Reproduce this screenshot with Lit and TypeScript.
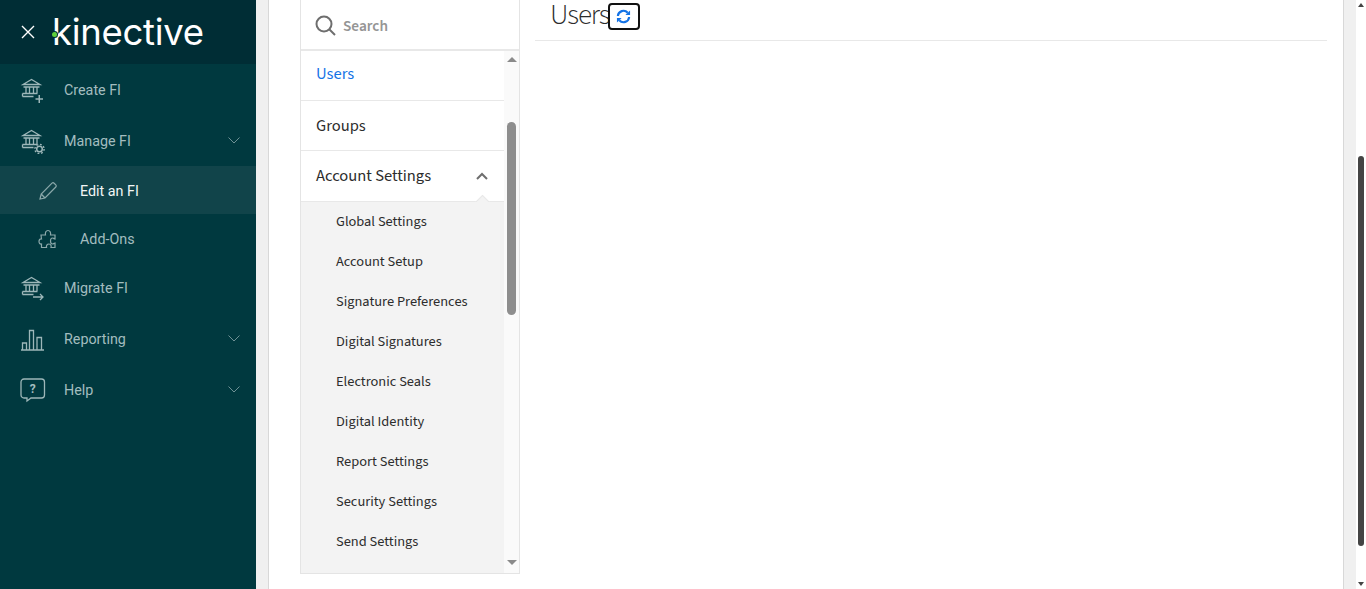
import { LitElement, html, css, svg } from "lit";
import { customElement } from "lit/decorators.js";

const bank = svg`<path d="M3 7.500 11.500 2.500 20 7.500ZM3.500 10h16M6 10v6M9.500 10v6M13.500 10v6M17 10v6M2.500 16.500h15M2.500 19.500h11M2.500 16.500v3"/>`;
const chev = html`<svg class="chev" viewBox="0 0 12 7"><path d="M.5.5 6 6 11.500.5"/></svg>`;

const icons: Record<string, unknown> = {
  create: html`<svg class="ico" viewBox="0 0 26 26">${bank}<path d="M15.500 22h7.500M19.250 18v8" stroke-width="1.500"/></svg>`,
  manage: html`<svg class="ico" viewBox="0 0 26 26">${bank}<circle cx="19.500" cy="21" r="2.800" stroke-width="1.500"/><circle cx="19.500" cy="21" r="4.600" stroke-dasharray="1.800 1.800" stroke-width="1.400"/></svg>`,
  migrate: html`<svg class="ico" viewBox="0 0 26 26">${bank}<path d="M13 22h10M20 19l3 3-3 3"/></svg>`,
  reporting: html`<svg class="ico" viewBox="0 0 26 26"><path d="M1 24h23M2.500 24v-7h4v7M9.500 24V4.500h4V24M17 24V11.500h4.500V24"/></svg>`,
  help: html`<svg class="ico" viewBox="0 0 26 26"><path d="M4 2h17.500a3 3 0 0 1 3 3v13a3 3 0 0 1-3 3H11l-4 3v-3H4a3 3 0 0 1-3-3V5a3 3 0 0 1 3-3Z"/><text x="12.800" y="16" text-anchor="middle" class="q">?</text></svg>`,
};

const subs = ["Global Settings","Account Setup","Signature Preferences","Digital Signatures","Electronic Seals","Digital Identity","Report Settings","Security Settings","Send Settings"];

@customElement("app-root")
export class AppRoot extends LitElement {
  static styles = css`
    :host { display: flex; height: 589px; width: 1366px; overflow: hidden; background: #fff; font-family: "Source Sans 3","Open Sans","Noto Sans",sans-serif; }
    .side { width: 256px; flex: none; background: #00393f; display: flex; flex-direction: column; font-family: Roboto, sans-serif; font-size: 14.300px; color: #a3bdbf; }
    .brand { height: 64px; flex: none; background: #002d35; display: flex; align-items: center; padding-left: 21px; gap: 17px; }
    .close { width: 14px; height: 14px; fill: none; stroke: #fff; stroke-width: 1.400; flex: none; }
    .logo { position: relative; color: #fff; font-family: Inter, sans-serif; font-weight: 400; font-size: 36.500px; letter-spacing: -0.300px; line-height: 40px; margin-top: -1px; }
    .dot { position: absolute; left: 0; top: 20px; width: 5px; height: 5px; border-radius: 50%; background: #5fd13c; box-shadow: 0 0 0 1px #002d35; }
    .nav { display: flex; flex-direction: column; }
    .row { height: 51px; display: flex; align-items: center; padding: 0 16px 0 20px; box-sizing: border-box; }
    .row .ico { margin-right: 18px; }
    .row span { flex: 1; }
    .sub { height: 48px; padding-left: 38px; padding-top: 2px; }
    .sub svg { margin-right: 22px; }
    .sub.on { background: #11444a; color: #f2f6f6; }
    .ico { width: 26px; height: 26px; fill: none; stroke: #9db7b9; stroke-width: 1.300; flex: none; }
    .sico { width: 20px; height: 20px; fill: none; stroke: #8ba8aa; stroke-width: 1.200; flex: none; }
    .q { font: 700 12px Roboto, sans-serif; fill: #a3bdbf; stroke: none; }
    .chev { width: 12px; height: 7px; fill: none; stroke: #6f9195; stroke-width: 1; }
    .main { flex: 1; display: flex; min-width: 0; background: #f0f0f0; }
    .card { width: 1076px; margin-left: 12px; flex: none; background: #fff; border-left: 1px solid #d8d8d8; border-right: 1px solid #d8d8d8; display: flex; padding-left: 31px; box-sizing: border-box; }
    .panel { width: 220px; height: 574px; flex: none; box-sizing: border-box; border: 1px solid #e4e4e4; border-top: 0; display: flex; flex-direction: column; }
    .search { height: 51px; flex: none; box-sizing: border-box; border-bottom: 2px solid #e8e8e8; display: flex; align-items: center; padding: 2px 0 0 14px; gap: 7px; color: #959595; font-size: 15.300px; font-weight: 600; }
    .search svg { width: 21px; height: 21px; fill: none; stroke: #6e6e6e; stroke-width: 2; }
    .list { flex: 1; display: flex; min-height: 0; }
    .items { flex: 1; min-width: 0; overflow: hidden; font-size: 16.500px; color: #2c2c2c; }
    .item { height: 50px; box-sizing: border-box; display: flex; align-items: center; padding-left: 15px; border-bottom: 1px solid #e8e8e8; }
    .item.blue { color: #1473e6; height: 50px; padding-bottom: 3px; }
    .item.acc { height: 51px; justify-content: space-between; padding-right: 16px; position: relative; }
    .item.acc svg { width: 12px; height: 8px; fill: none; stroke: #6e6e6e; stroke-width: 2; }
    .notch { position: absolute; right: 14px; bottom: -1px; width: 16px; height: 8px; overflow: hidden; }
    .notch::after { content: ""; position: absolute; left: 2.500px; top: 2.500px; width: 11px; height: 11px; transform: rotate(45deg); background: #f3f3f3; border: 1px solid #e8e8e8; box-sizing: border-box; }
    .subs { background: #f3f3f3; height: 372px; font-size: 14.400px; }
    .subitem { height: 40px; box-sizing: border-box; padding-bottom: 2px; display: flex; align-items: center; padding-left: 35px; color: #2c2c2c; }
    .track { width: 15px; flex: none; background: #fafafa; position: relative; }
    .up, .dn { width: 0; height: 0; border-left: 5px solid transparent; border-right: 5px solid transparent; position: absolute; left: 2.500px; }
    .track .up { top: 6px; border-bottom: 5px solid #8a8a8a; }
    .track .dn { bottom: 8px; border-top: 5px solid #8a8a8a; }
    .thumb { position: absolute; left: 3px; top: 71px; width: 9px; height: 193px; background: #8e8e8e; border-radius: 5px; }
    .content { flex: 1; min-width: 0; padding-left: 15px; padding-right: 16px; }
    .head { height: 41px; box-sizing: border-box; border-bottom: 1px solid #e8e8e8; display: flex; align-items: flex-start; padding-left: 15px; font-size: 29px; font-weight: 300; color: #2c2c2c; line-height: 30px; }
    .head b { font-weight: 300; letter-spacing: -1.100px; width: 58px; flex: none; white-space: nowrap; }
    .refresh { width: 32px; height: 27px; margin-top: 3px; box-sizing: border-box; border: 2px solid #111; border-radius: 4px; background: #fff; display: flex; align-items: center; justify-content: center; padding-right: 2px; }
    .refresh svg { width: 15px; height: 15px; fill: none; stroke: #1473e6; stroke-width: 2.300; }
    .refresh .tip { fill: #1473e6; stroke: none; }
    .gutter { flex: 1; }
    .sb { width: 10px; flex: none; background: #fff; position: relative; }
    .sb-up, .sb-dn { position: absolute; left: 1.500px; width: 0; height: 0; border-left: 3.500px solid transparent; border-right: 3.500px solid transparent; }
    .sb-up { top: 3px; border-bottom: 4px solid #444; }
    .sb-dn { bottom: 3px; border-top: 4px solid #444; }
    .sb-thumb { position: absolute; left: 2px; top: 156px; width: 6px; height: 390px; background: #444; border-radius: 3px; }
  `;

  render() {
    return html`
      <aside class="side">
        <div class="brand">
          <svg class="close" viewBox="0 0 14 14"><path d="M1 1l12 12M13 1 1 13"/></svg>
          <div class="logo">kinective<i class="dot"></i></div>
        </div>
        <nav class="nav">
          <div class="row">${icons.create}<span>Create FI</span></div>
          <div class="row">${icons.manage}<span>Manage FI</span>${chev}</div>
          <div class="row sub on"><svg class="sico" viewBox="0 0 20 20"><path d="M2 18l1.200-5L14 2.200a1.500 1.500 0 0 1 2.100 0l1.700 1.700a1.500 1.500 0 0 1 0 2.100L7 17l-5 1ZM3.200 13 7 17"/></svg><span>Edit an FI</span></div>
          <div class="row sub"><svg class="sico" viewBox="0 0 20 20"><path d="M3 6h4.500C7 3.500 8 1.500 10 1.500s3 2 2.500 4.500H17v4c-1.500-.5-1.500-1-2.500-1S12.500 10 12.500 12s1 3 2 3 1-.5 2.500-1v4.500h-4c.5-1.500 0-3.500-2-3.500s-3 2-2.500 3.500H3.500V15C2 15.500 1 14 1 12.500S2 9.500 3.500 10Z"/></svg><span>Add-Ons</span></div>
          <div class="row">${icons.migrate}<span>Migrate FI</span></div>
          <div class="row">${icons.reporting}<span>Reporting</span>${chev}</div>
          <div class="row">${icons.help}<span>Help</span>${chev}</div>
        </nav>
      </aside>
      <main class="main">
        <div class="card">
          <section class="panel">
            <div class="search">
              <svg viewBox="0 0 21 21"><circle cx="9" cy="9" r="7.500"/><path d="M14.500 14.500 20 20"/></svg>
              <span>Search</span>
            </div>
            <div class="list">
              <div class="items">
                <div class="item blue">Users</div>
                <div class="item">Groups</div>
                <div class="item acc">Account Settings
                  <svg viewBox="0 0 12 8"><path d="M1 7l5-5 5 5"/></svg>
                  <i class="notch"></i>
                </div>
                <div class="subs">${subs.map((s) => html`<div class="subitem">${s}</div>`)}</div>
              </div>
              <div class="track"><i class="up"></i><i class="thumb"></i><i class="dn"></i></div>
            </div>
          </section>
          <section class="content">
            <div class="head"><b>Users</b>
              <div class="refresh"><svg viewBox="0 0 16 16"><path d="M2 7.500A6 6 0 0 1 12.500 4M14 8.500A6 6 0 0 1 3.500 12"/><path class="tip" d="M15 1.500v5h-5ZM1 14.500v-5h5Z"/></svg></div>
            </div>
          </section>
        </div>
        <div class="gutter"></div>
        <div class="sb"><i class="sb-up"></i><i class="sb-thumb"></i><i class="sb-dn"></i></div>
      </main>
    `;
  }
}
